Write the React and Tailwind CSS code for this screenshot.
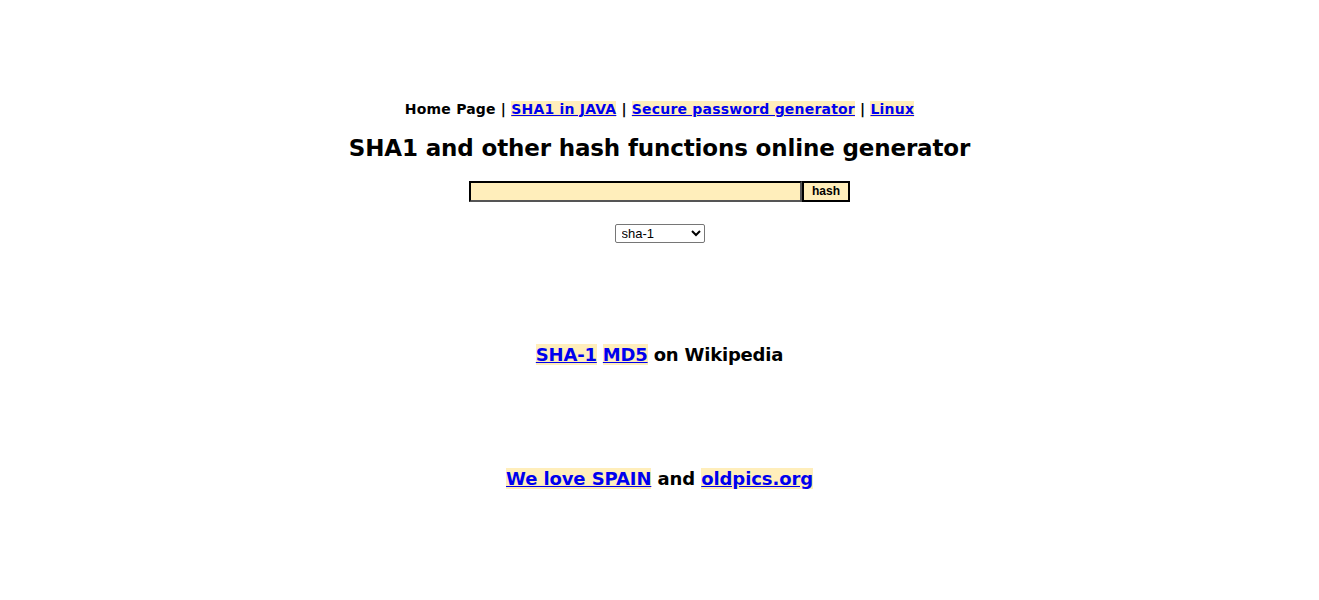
export default function App() {
  const font = { fontFamily: '"DejaVu Sans", Verdana, sans-serif' };
  const link = "text-[#0000ee] underline bg-[#ffeebb]";
  return (
    <div className="w-[1319px] h-[600px] bg-white text-black font-bold flex flex-col items-center" style={font}>
      <div className="h-[100px]" />
      <div className="text-[14px] leading-[18px] tracking-[0.2px]">
        Home Page | <a className={link}>SHA1 in JAVA</a> | <a className={link}>Secure password generator</a> | <a className={link}>Linux</a>
      </div>
      <h1 className="mt-[16px] text-[23px] leading-[28px] tracking-[-0.15px]">SHA1 and other hash functions online generator</h1>
      <div className="mt-[19px] flex">
        <input className="w-[333px] h-[21px] bg-[#ffeebb] border-2 border-t-black border-l-black border-b-[#555] border-r-[#555] outline-none" />
        <button className="w-[48px] h-[21px] bg-[#ffeebb] border-2 border-black text-[12px] leading-[15px]" style={{ fontFamily: '"Liberation Sans", Arial, sans-serif' }}>hash</button>
      </div>
      <select className="mt-[22px] w-[90px] h-[19px] border border-[#767676] rounded-[2px] text-[13px] font-normal px-[2px] bg-white" style={{ fontFamily: '"Liberation Sans", Arial, sans-serif' }}>
        <option>sha-1</option>
      </select>
      <div className="mt-[100px] text-[18px] leading-[24px] tracking-[-0.2px]">
        <a className={link}>SHA-1</a> <a className={link}>MD5</a> on Wikipedia
      </div>
      <div className="mt-[100px] text-[18px] leading-[24px] tracking-[-0.1px]">
        <a className={link}>We love SPAIN</a> and <a className={link}>oldpics.org</a>
      </div>
    </div>
  );
}
